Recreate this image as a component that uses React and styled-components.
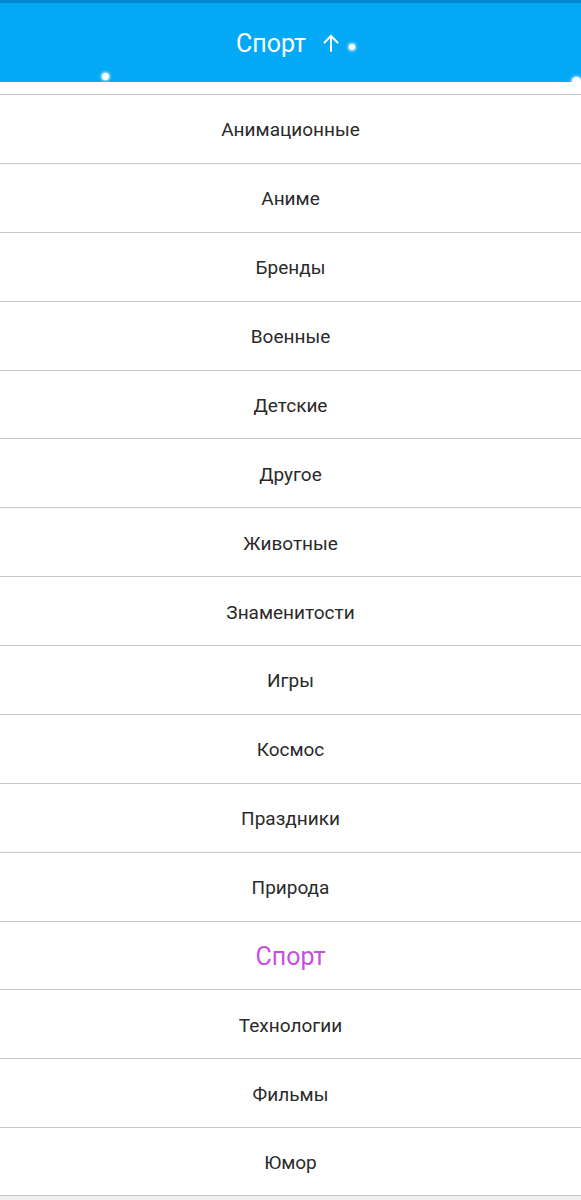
import styled, { createGlobalStyle } from "styled-components"

const categories = [
  "Анимационные",
  "Аниме",
  "Бренды",
  "Военные",
  "Детские",
  "Другое",
  "Животные",
  "Знаменитости",
  "Игры",
  "Космос",
  "Праздники",
  "Природа",
  "Спорт",
  "Технологии",
  "Фильмы",
  "Юмор",
]

const selected = "Спорт"

// snow flakes floating over the header
const flakes = [
  { x: 105, y: 73, s: 7 },
  { x: 352, y: 44, s: 6 },
  { x: 576, y: 78, s: 9 },
]

const App = () => {
  return (
    <Page>
      <GlobalStyle />
      <Header>
        <Title>{selected}</Title>
        <svg width="20" height="20" viewBox="0 0 20 20">
          <path d="M10 18V3M3.5 9.5L10 3l6.5 6.5" stroke="#fff" strokeWidth="2" fill="none" strokeLinecap="round" />
        </svg>
        {flakes.map((f, i) => (
          <Flake key={i} style={{ left: f.x - f.s / 2, top: f.y - f.s / 2, width: f.s, height: f.s }} />
        ))}
      </Header>
      <List>
        {categories.map((c) => (
          <Row key={c} $active={c === selected}>
            {c}
          </Row>
        ))}
      </List>
    </Page>
  )
}

export default App

const GlobalStyle = createGlobalStyle`
  html, body {
    margin: 0;
    padding: 0;
    background: #f0f0f0;
  }
  body {
    font-family: Roboto, "Noto Sans", sans-serif;
  }
`

const Page = styled.div`
  width: 581px;
  min-height: 1200px;
  background: #f0f0f0;
`

const Header = styled.div`
  position: relative;
  height: 79px;
  background: #03a9f4;
  border-top: 3px solid #0288d1;
  display: flex;
  align-items: center;
  justify-content: center;
  gap: 15px;
  padding-right: 4px;
  box-sizing: content-box;
`

const Title = styled.div`
  color: #fff;
  font-size: 25px;
  margin-top: 2px;
`

const Flake = styled.span`
  position: absolute;
  border-radius: 50%;
  background: #fff;
  box-shadow: 0 0 3px 1px rgba(255, 255, 255, 0.8);
`

const List = styled.div`
  background: #fff;
  padding-top: 12px;
`

const Row = styled.div`
  height: 68.875px;
  box-sizing: border-box;
  border-top: 1px solid #c8c8c8;
  padding-top: 2px;
  display: flex;
  align-items: center;
  justify-content: center;
  font-size: ${(p) => (p.$active ? "25px" : "19px")};
  color: ${(p) => (p.$active ? "#c550e0" : "#2a2a2a")};

  &:last-child {
    border-bottom: 1px solid #c8c8c8;
  }
`
